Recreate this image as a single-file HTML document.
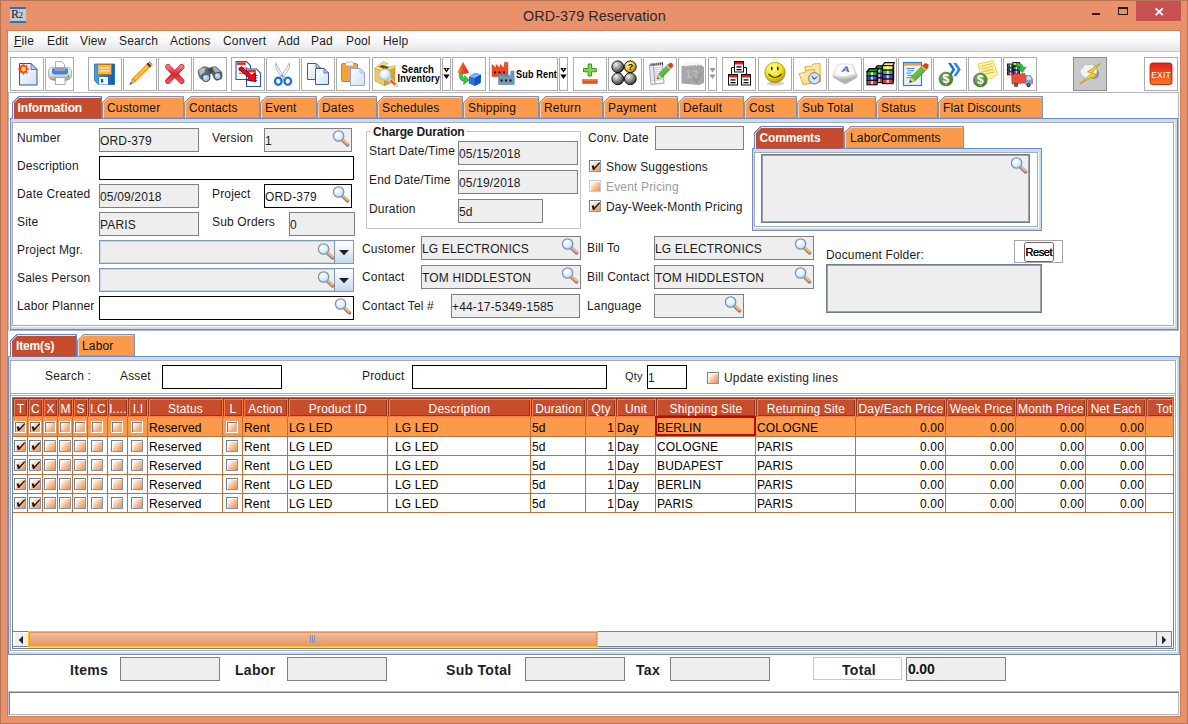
<!DOCTYPE html><html><head><meta charset="utf-8"><title>ORD-379 Reservation</title><style>
html,body{margin:0;padding:0}
body{width:1188px;height:724px;overflow:hidden;background:#E8916A;position:relative;font-family:"Liberation Sans",sans-serif;font-size:12px;color:#1c1c1c;letter-spacing:0.16px}
.a{position:absolute}
.t{position:absolute;white-space:nowrap;line-height:14px;height:14px}
.b{font-weight:bold;letter-spacing:-0.17px}
.f{position:absolute;box-sizing:border-box;border:1px solid #7f7f7f;background:#EEEEEE}
.fw{position:absolute;box-sizing:border-box;border:1px solid #000;background:#fff}
.tb{position:absolute;box-sizing:border-box;border:1px solid #ACACAC;background:#fff;top:57px;height:34px}
.cb{position:absolute;box-sizing:border-box;width:12px;height:12px;border:1px solid #6C7E94;border-right-color:#8496ac;border-bottom-color:#8496ac;background:linear-gradient(135deg,#ffffff 0%,#ffffff 14%,#fbdcc4 38%,#f6b98c 62%,#ef8e48 100%);box-shadow:inset 1px 1px 0 #fff}
.cbs{border-color:#fff;box-shadow:inset 1px 1px 0 #6C7E94,inset -1px -1px 0 #b4bccb}
.cbd{border-color:#b9cde6}
.cbt{}
.th{position:absolute;box-sizing:border-box;top:398px;height:19px;background:#C64E2D;border:1px solid;border-color:#93361A #FF7A45 #FF7A45 #93361A;box-shadow:inset 1px 1px 0 #FF7A45,inset -1px -1px 0 #93361A;color:#fff;text-align:center;line-height:20px;white-space:nowrap;overflow:hidden}
.c{position:absolute;white-space:nowrap;line-height:14px;height:14px;color:#000}
</style></head><body><svg width="0" height="0" style="position:absolute"><defs>
<radialGradient id="lens" cx="40%" cy="35%" r="70%"><stop offset="0" stop-color="#ffffff"/><stop offset="0.55" stop-color="#dcf0fd"/><stop offset="1" stop-color="#a6d2f6"/></radialGradient>
</defs></svg>
<div class="a" style="left:0;top:0;width:1188px;height:724px;box-sizing:border-box;border:1px solid #B87352"></div>
<div class="a" style="left:7px;top:30px;width:1174px;height:687px;background:#C98058"></div>
<div class="a" id="content" style="left:8px;top:31px;width:1172px;height:685px;background:#fff"></div>
<div class="t" style="left:523px;top:7px;font-size:14.4px;line-height:18px;height:18px;color:#2a2a2a;letter-spacing:0.06px" id="title">ORD-379 Reservation</div>
<div class="a" style="left:10px;top:7px;width:16px;height:16px;background:#c6cacf;border-top:2px solid #2470c8;border-bottom:2px solid #2470c8;box-sizing:border-box"><div class="t" style="left:1px;top:-2px;font-family:'Liberation Serif',serif;font-size:12px;color:#1a1a1a;letter-spacing:-0.5px">R<span style="font-size:9px">2</span></div></div>
<div class="a" style="left:1092px;top:13px;width:8px;height:2px;background:#1e1e1e"></div>
<div class="a" style="left:1118px;top:7px;width:10px;height:8px;box-sizing:border-box;border:1px solid #1e1e1e;border-top-width:2px"></div>
<div class="a" style="left:1136px;top:1px;width:45px;height:20px;background:#C75050"></div>
<svg class="a" style="left:1153px;top:6px" width="12" height="11" viewBox="0 0 12 11"><path d="M2.6 2.4 L9.8 9.1 M9.8 2.4 L2.6 9.1" stroke="#fff" stroke-width="1.9" fill="none"/></svg>
<div class="a" style="left:8px;top:31px;width:1172px;height:20px;background:linear-gradient(#ffffff,#fafafa 40%,#e6e6e6)"></div>
<div class="a" style="left:8px;top:51px;width:1172px;height:1px;background:#c9c9c9"></div>
<div class="t" style="left:14px;top:34px"><span style="text-decoration:underline">F</span>ile</div>
<div class="t" style="left:47px;top:34px">Edit</div>
<div class="t" style="left:80px;top:34px">View</div>
<div class="t" style="left:119px;top:34px">Search</div>
<div class="t" style="left:170px;top:34px">Actions</div>
<div class="t" style="left:223px;top:34px">Convert</div>
<div class="t" style="left:278px;top:34px">Add</div>
<div class="t" style="left:311px;top:34px">Pad</div>
<div class="t" style="left:346px;top:34px">Pool</div>
<div class="t" style="left:383px;top:34px">Help</div>
<div class="a" style="left:8px;top:92px;width:1171px;height:239px;box-sizing:border-box;border:1px solid #B6B6B6"></div>
<div class="tb" id="tb0" style="left:10px;width:34px;background:#fff;border-color:#ACACAC"></div>
<div class="tb" id="tb1" style="left:45px;width:29px;background:#fff;border-color:#ACACAC"></div>
<div class="tb" id="tb2" style="left:88px;width:34px;background:#fff;border-color:#ACACAC"></div>
<div class="tb" id="tb3" style="left:123px;width:34px;background:#fff;border-color:#ACACAC"></div>
<div class="tb" id="tb4" style="left:158px;width:34px;background:#fff;border-color:#ACACAC"></div>
<div class="tb" id="tb5" style="left:193px;width:34px;background:#fff;border-color:#ACACAC"></div>
<div class="tb" id="tb6" style="left:231px;width:34px;background:#fff;border-color:#ACACAC"></div>
<div class="tb" id="tb7" style="left:266px;width:34px;background:#fff;border-color:#ACACAC"></div>
<div class="tb" id="tb8" style="left:301px;width:34px;background:#fff;border-color:#ACACAC"></div>
<div class="tb" id="tb9" style="left:336px;width:34px;background:#fff;border-color:#ACACAC"></div>
<div class="tb" id="tb10" style="left:372px;width:69px;background:#fff;border-color:#ACACAC"></div>
<div class="tb" id="tb11" style="left:442px;width:9px;background:#fff;border-color:#ACACAC"></div>
<div class="tb" id="tb12" style="left:452px;width:34px;background:#fff;border-color:#ACACAC"></div>
<div class="tb" id="tb13" style="left:489px;width:69px;background:#fff;border-color:#ACACAC"></div>
<div class="tb" id="tb14" style="left:559px;width:9px;background:#fff;border-color:#ACACAC"></div>
<div class="tb" id="tb15" style="left:573px;width:34px;background:#fff;border-color:#ACACAC"></div>
<div class="tb" id="tb16" style="left:608px;width:34px;background:#fff;border-color:#ACACAC"></div>
<div class="tb" id="tb17" style="left:643px;width:34px;background:#fff;border-color:#ACACAC"></div>
<div class="tb" id="tb18" style="left:678px;width:28px;background:#fff;border-color:#ACACAC"></div>
<div class="tb" id="tb19" style="left:708px;width:9px;background:#fff;border-color:#ACACAC"></div>
<div class="tb" id="tb20" style="left:722px;width:34px;background:#fff;border-color:#ACACAC"></div>
<div class="tb" id="tb21" style="left:758px;width:34px;background:#fff;border-color:#ACACAC"></div>
<div class="tb" id="tb22" style="left:793px;width:34px;background:#fff;border-color:#ACACAC"></div>
<div class="tb" id="tb23" style="left:828px;width:34px;background:#fff;border-color:#ACACAC"></div>
<div class="tb" id="tb24" style="left:863px;width:34px;background:#fff;border-color:#ACACAC"></div>
<div class="tb" id="tb25" style="left:898px;width:34px;background:#fff;border-color:#ACACAC"></div>
<div class="tb" id="tb26" style="left:933px;width:34px;background:#fff;border-color:#ACACAC"></div>
<div class="tb" id="tb27" style="left:968px;width:34px;background:#fff;border-color:#ACACAC"></div>
<div class="tb" id="tb28" style="left:1003px;width:34px;background:#fff;border-color:#ACACAC"></div>
<div class="tb" id="tb29" style="left:1073px;width:34px;background:#C8C8C8;border-color:#8a8a8a"></div>
<div class="tb" id="tb30" style="left:1144px;width:34px;background:#fff;border-color:#ACACAC"></div>
<svg width="0" height="0" style="position:absolute"><defs>
<linearGradient id="gPage" x1="0" y1="0" x2="1" y2="1"><stop offset="0" stop-color="#ffffff"/><stop offset="1" stop-color="#cfe1f6"/></linearGradient>
<radialGradient id="gStar"><stop offset="0" stop-color="#ffe93b"/><stop offset="0.45" stop-color="#ffb01e"/><stop offset="0.75" stop-color="#f0372b"/><stop offset="1" stop-color="#f0372b" stop-opacity="0"/></radialGradient>
<linearGradient id="gPrn" x1="0" y1="0" x2="0" y2="1"><stop offset="0" stop-color="#f7f7f7"/><stop offset="0.6" stop-color="#d6d8da"/><stop offset="1" stop-color="#8e9194"/></linearGradient>
<linearGradient id="gBlue" x1="0" y1="0" x2="1" y2="0"><stop offset="0" stop-color="#4aa3ea"/><stop offset="0.5" stop-color="#1f78d1"/><stop offset="1" stop-color="#0f5cb0"/></linearGradient>
<linearGradient id="gRedX" x1="0" y1="0" x2="0" y2="1"><stop offset="0" stop-color="#f0777c"/><stop offset="0.5" stop-color="#dc2431"/><stop offset="1" stop-color="#e8525a"/></linearGradient>
<radialGradient id="gBall" cx="35%" cy="30%" r="75%"><stop offset="0" stop-color="#f2f2f2"/><stop offset="0.55" stop-color="#8c8c8c"/><stop offset="1" stop-color="#2e2e2e"/></radialGradient>
<radialGradient id="gBallY" cx="35%" cy="30%" r="75%"><stop offset="0" stop-color="#fff6b0"/><stop offset="0.6" stop-color="#f2c21d"/><stop offset="1" stop-color="#8a6a08"/></radialGradient>
<radialGradient id="gSmile" cx="40%" cy="30%" r="75%"><stop offset="0" stop-color="#ffffa8"/><stop offset="0.55" stop-color="#f4e21a"/><stop offset="1" stop-color="#a48e06"/></radialGradient>
<linearGradient id="gGold" x1="0" y1="0" x2="1" y2="1"><stop offset="0" stop-color="#f7d66a"/><stop offset="1" stop-color="#c8951a"/></linearGradient>
<linearGradient id="gFolder" x1="0" y1="0" x2="1" y2="1"><stop offset="0" stop-color="#fff6c8"/><stop offset="1" stop-color="#f7d060"/></linearGradient>
<linearGradient id="gKey" x1="0" y1="0" x2="1" y2="1"><stop offset="0" stop-color="#ffffff"/><stop offset="1" stop-color="#b9b9b9"/></linearGradient>
<linearGradient id="gGreenP" x1="0" y1="0" x2="1" y2="1"><stop offset="0" stop-color="#8be05a"/><stop offset="1" stop-color="#2f9a1f"/></linearGradient>
<linearGradient id="gExit" x1="0" y1="0" x2="0" y2="1"><stop offset="0" stop-color="#e2231a"/><stop offset="0.5" stop-color="#f04a1c"/><stop offset="1" stop-color="#f77b1c"/></linearGradient>
<linearGradient id="gCone" x1="0" y1="0" x2="1" y2="0"><stop offset="0" stop-color="#ff9a5a"/><stop offset="0.5" stop-color="#f04a1e"/><stop offset="1" stop-color="#d42a10"/></linearGradient>
<radialGradient id="gDollar" cx="40%" cy="35%" r="70%"><stop offset="0" stop-color="#7fae6c"/><stop offset="1" stop-color="#3f7a34"/></radialGradient>
</defs></svg>
<svg class="a" style="left:10px;top:57px" width="34" height="34" viewBox="0 0 34 34"><path d="M9.5 6.5 L21.0 6.5 L27.0 12.5 L27.0 28.0 L9.5 28.0 Z" fill="url(#gPage)" stroke="#3C5390" stroke-width="1"/><path d="M21.0 6.5 L21.0 12.5 L27.0 12.5 Z" fill="#b7d0ee" stroke="#3C5390" stroke-width="0.7"/><polygon points="19.7,12.0 17.1,13.5 17.9,16.4 15.0,15.6 13.5,18.2 12.0,15.6 9.1,16.4 9.9,13.5 7.3,12.0 9.9,10.5 9.1,7.6 12.0,8.4 13.5,5.8 15.0,8.4 17.9,7.6 17.1,10.5" fill="#f2402c" fill-opacity="0.85"/><circle cx="13.5" cy="12" r="4.2" fill="url(#gStar)"/><circle cx="13.5" cy="12" r="2.2" fill="#ffe63a"/></svg>
<svg class="a" style="left:45px;top:57px" width="29" height="34" viewBox="0 0 29 34"><path d="M10.5 4.5 L16.5 4.5 L19.5 7.5 L19.5 13 L10.5 13 Z" fill="#fff" stroke="#9a9a9a" stroke-width="0.8"/><path d="M3.5 14 Q3.5 10.5 8 10.5 L22 10.5 Q26.5 10.5 26.5 14 L26.5 18 Q26.5 23 20 23.5 L10 23.5 Q3.5 23 3.5 18 Z" fill="url(#gPrn)" stroke="#8a8d90" stroke-width="0.6"/><path d="M7 11.5 L23 11.5 L23 15 Q23 17.5 20 17.5 L10 17.5 Q7 17.5 7 15 Z" fill="#3f83e6"/><rect x="10" y="10.5" width="10" height="3.5" fill="#9aa0b4"/><rect x="10.5" y="20.5" width="9.5" height="7" fill="#fff" stroke="#9a9a9a" stroke-width="0.8"/><circle cx="23.3" cy="19.3" r="1" fill="#2fae3a"/></svg>
<svg class="a" style="left:88px;top:57px" width="34" height="34" viewBox="0 0 34 34"><path d="M6.5 7 L26.5 7 L26.5 27.5 L10.5 27.5 L6.5 23.5 Z" fill="url(#gBlue)" stroke="#1765b8" stroke-width="0.8"/><rect x="9.5" y="7.5" width="14" height="10" fill="#f7b64c" stroke="#b8761c" stroke-width="0.9"/><rect x="11.5" y="10" width="10" height="1.5" fill="#fde2a6"/><rect x="11.5" y="13" width="10" height="1.5" fill="#fde2a6"/><rect x="11" y="20" width="9" height="7.5" fill="#f4f7fb"/><rect x="13" y="22" width="2.2" height="3.5" fill="#1a55c0"/></svg>
<svg class="a" style="left:123px;top:57px" width="34" height="34" viewBox="0 0 34 34"><path d="M7 27.5 L8.5 22 L25 5.5 L28.5 9 L12 25.5 Z" fill="#f6a61c"/><path d="M10.2 23.8 L26.6 7.2" stroke="#fbd27a" stroke-width="1.2"/><path d="M7 27.5 L8.5 22 L12 25.5 Z" fill="#e9c9a0"/><path d="M7 27.5 L7.6 25.2 L9.2 26.8 Z" fill="#555"/><path d="M23.5 7 L25 5.5 L28.5 9 L27 10.5 Z" fill="#333"/><path d="M25.5 5 L26.5 4.3 L29.6 7.5 L29 8.5 Z" fill="#f0502a"/><path d="M6 28.5 L12 22" stroke="#000" stroke-opacity="0.12" stroke-width="3"/></svg>
<svg class="a" style="left:158px;top:57px" width="34" height="34" viewBox="0 0 34 34"><path d="M10 9.8 L23.6 24.2 M23.6 9.8 L10 24.2" stroke="#b8202a" stroke-width="5.6" stroke-linecap="round"/><path d="M10 9.8 L23.6 24.2 M23.6 9.8 L10 24.2" stroke="url(#gRedX)" stroke-width="4.4" stroke-linecap="round"/></svg>
<svg class="a" style="left:193px;top:57px" width="34" height="34" viewBox="0 0 34 34"><path d="M5 13 Q3.8 17 7.5 22 L12.5 25.2 Q17 24.5 17.6 20 L16.8 12 Q14 8.6 10 9.6 Z" fill="#666a6e"/><path d="M5.8 13.2 Q8.5 10.2 12.6 10.4 L11.6 15.5 L7 18.5 Z" fill="#b9bdc0"/><path d="M16.8 11.2 Q20 8.4 23.2 9.4 L29 15 Q30.2 19 28.6 22 L24 23.8 Q20.4 22.4 19.4 18 Z" fill="#5c6064"/><path d="M19.2 11 Q21.5 9.6 23.2 10.4 L27.4 14.4 L22.6 15.8 Z" fill="#a9adb0"/><path d="M15.2 10.8 L19.6 10.4 L19.8 16.5 L16 17 Z" fill="#45494d"/><circle cx="13" cy="20.8" r="4" fill="#4d5155"/><circle cx="13" cy="20.8" r="3.1" fill="#a4cdf6"/><circle cx="12.2" cy="20" r="1.2" fill="#dcecfc"/><circle cx="24.6" cy="19" r="3.8" fill="#4d5155"/><circle cx="24.6" cy="19" r="2.9" fill="#a4cdf6"/><circle cx="23.9" cy="18.3" r="1.1" fill="#dcecfc"/></svg>
<svg class="a" style="left:231px;top:57px" width="34" height="34" viewBox="0 0 34 34"><path d="M5 4.5 L15.5 4.5 L19.5 8.5 L19.5 22.5 L5 22.5 Z" fill="#fff" stroke="#2f55a8" stroke-width="1.1"/><rect x="5.8" y="5.3" width="9.0" height="2.6" fill="#f02a1a"/><rect x="8" y="10.5" width="8.5" height="1" fill="#3c6ac8"/><rect x="8" y="13.1" width="8.5" height="1" fill="#3c6ac8"/><rect x="8" y="15.7" width="8.5" height="1" fill="#3c6ac8"/><path d="M15.5 12 L25.5 12 L29.5 16 L29.5 29.5 L15.5 29.5 Z" fill="#fff" stroke="#2f55a8" stroke-width="1.1"/><rect x="16.3" y="12.8" width="8.5" height="2.6" fill="#f02a1a"/><rect x="18.5" y="18.0" width="8" height="1" fill="#3c6ac8"/><rect x="18.5" y="20.6" width="8" height="1" fill="#3c6ac8"/><rect x="18.5" y="23.2" width="8" height="1" fill="#3c6ac8"/><path d="M7.6 12.2 L10.2 9.6 L20.8 18.2 L24.3 15.5 L24.8 24.6 L15.5 23 L18.2 20.8 Z" fill="#f00a0a" stroke="#400000" stroke-width="0.8"/></svg>
<svg class="a" style="left:266px;top:57px" width="34" height="34" viewBox="0 0 34 34"><path d="M9.5 6 Q8.5 10 12 15 L18.5 24 L20 22.5 L12.5 11 Z" fill="#f2f2f2" stroke="#9a9a9a" stroke-width="0.7"/><path d="M23.5 6 Q24.5 10 21 15 L14.5 24 L13 22.5 L20.5 11 Z" fill="#fafafa" stroke="#9a9a9a" stroke-width="0.7"/><circle cx="16.5" cy="19" r="0.9" fill="#777"/><ellipse cx="12.3" cy="24.3" rx="3.3" ry="3.6" fill="none" stroke="#1c6fe0" stroke-width="2.3"/><ellipse cx="21.8" cy="24.3" rx="3.3" ry="3.6" fill="none" stroke="#1c6fe0" stroke-width="2.3"/></svg>
<svg class="a" style="left:301px;top:57px" width="34" height="34" viewBox="0 0 34 34"><path d="M6.5 6.5 L15.0 6.5 L19.5 11.0 L19.5 22.5 L6.5 22.5 Z" fill="url(#gPage)" stroke="#44599a" stroke-width="1"/><path d="M15.0 6.5 L15.0 11.0 L19.5 11.0 Z" fill="#b7d0ee" stroke="#44599a" stroke-width="0.7"/><path d="M14.5 11.5 L23.0 11.5 L27.5 16.0 L27.5 27.5 L14.5 27.5 Z" fill="url(#gPage)" stroke="#44599a" stroke-width="1"/><path d="M23.0 11.5 L23.0 16.0 L27.5 16.0 Z" fill="#b7d0ee" stroke="#44599a" stroke-width="0.7"/></svg>
<svg class="a" style="left:336px;top:57px" width="34" height="34" viewBox="0 0 34 34"><rect x="5.5" y="6.5" width="16" height="18" rx="1.5" fill="#f6a23a" stroke="#c27a1c" stroke-width="0.9"/><path d="M9.5 9 L9.5 6.5 Q9.5 5 11.5 5 L15.5 5 Q17.5 5 17.5 6.5 L17.5 9 Z" fill="#f4f4f4" stroke="#a5a5a5" stroke-width="0.7"/><path d="M14.5 11.5 L24 11.5 L28.5 16 L28.5 28.5 L14.5 28.5 Z" fill="url(#gPage)" stroke="#8f9ae0" stroke-width="0.9"/><path d="M24 11.5 L24 16 L28.5 16 Z" fill="#dfe8f8" stroke="#8f9ae0" stroke-width="0.6"/></svg>
<svg class="a" style="left:372px;top:57px" width="69" height="34" viewBox="0 0 69 34"><path d="M5 9.5 L11 5 L15.8 6.4 L10 10.8 Z" fill="#f9e08a" stroke="#b8881c" stroke-width="0.5"/><path d="M5 11 L10 8 L17.5 10 L12.5 14 Z" fill="#6e4a0c"/><path d="M2.8 11.2 L12.5 14.5 L12.5 28.6 L3.2 24.2 Z" fill="#f4ca50" stroke="#b8881c" stroke-width="0.5"/><path d="M12.5 14.5 L22.9 11.2 L22.9 24.6 L12.5 28.6 Z" fill="#d9a428" stroke="#a87a14" stroke-width="0.5"/><path d="M17.5 10 L23.4 8.6 L22.9 11.2 L12.5 14.5 Z" fill="#f9dc74" stroke="#b8881c" stroke-width="0.5"/><path d="M2.8 11.2 L5 9.5 L10 10.8 L12.5 14.5 Z" fill="#fbe89a" stroke="#b8881c" stroke-width="0.4"/><path d="M17 22 L24.5 28.5" stroke="#d8d8d8" stroke-width="3.8" stroke-linecap="round"/><path d="M18.5 23.2 L23.5 27.6" stroke="#f0562a" stroke-width="2.6"/><path d="M19.5 22.6 L24 26.8" stroke="#f7b04a" stroke-width="1"/><circle cx="12.8" cy="17.5" r="5.6" fill="url(#lens)" stroke="#b9c4cf" stroke-width="1.4"/><text x="29.5" y="15.8" font-family="Liberation Sans, sans-serif" font-weight="bold" font-size="10" fill="#000" textLength="32.5" lengthAdjust="spacingAndGlyphs">Search</text><text x="25.5" y="24.9" font-family="Liberation Sans, sans-serif" font-weight="bold" font-size="10" fill="#000" textLength="42.5" lengthAdjust="spacingAndGlyphs">Inventory</text></svg>
<svg class="a" style="left:442px;top:57px" width="9" height="34" viewBox="0 0 9 34"><path d="M1.3 11 L7.7 11 L4.5 15.4 Z" fill="#000"/><path d="M1.3 17.6 L7.7 17.6 L4.5 22 Z" fill="#000"/><circle cx="4.5" cy="12.3" r="0.7" fill="#fff"/></svg>
<svg class="a" style="left:452px;top:57px" width="34" height="34" viewBox="0 0 34 34"><path d="M11 5 L17 15.5 Q11 18.5 5 15.5 Z" fill="url(#gCone)"/><path d="M17 19.5 L23 15.8 L29 17.5 L28.5 26 L22.5 29 L17 26.5 Z" fill="#2f6fe0"/><path d="M17 19.5 L23 15.8 L29 17.5 L23 21 Z" fill="#7fb0f7"/><path d="M23 21 L29 17.5 L28.5 26 L22.5 29 Z" fill="#1c4fc0"/><path d="M7.5 16 Q6 23 12 24.5 L11.5 27.5 L17.5 23 L12.5 18.5 L12.3 21.3 Q10 20.5 10.8 16 Z" fill="#3fc43a" stroke="#1f8a1c" stroke-width="0.5"/></svg>
<svg class="a" style="left:489px;top:57px" width="69" height="34" viewBox="0 0 69 34"><path d="M3 19.5 L3 7.5 L7 11 L7 7.5 L11 11 L11 7.5 L15 11 L15.5 5.5 L18.8 5.5 L19 19.5 Z" fill="#f04a1e" stroke="#c8300c" stroke-width="0.5"/><rect x="5" y="14.5" width="2" height="2" fill="#111"/><rect x="9.5" y="14.5" width="2" height="2" fill="#111"/><rect x="14" y="14.5" width="2" height="2" fill="#111"/><path d="M9.5 27.5 L9.5 16 L13.5 19.5 L13.5 16 L17.5 19.5 L17.5 16 L21.5 19.5 L22 14 L25 14 L25.3 27.5 Z" fill="#6f9ab8" stroke="#4f7898" stroke-width="0.5"/><rect x="11.5" y="22.5" width="2" height="2" fill="#111"/><rect x="16" y="22.5" width="2" height="2" fill="#111"/><rect x="20.5" y="22.5" width="2" height="2" fill="#111"/><text x="27" y="20.8" font-family="Liberation Sans, sans-serif" font-weight="bold" font-size="10.5" fill="#000" textLength="41" lengthAdjust="spacingAndGlyphs">Sub Rent</text></svg>
<svg class="a" style="left:559px;top:57px" width="9" height="34" viewBox="0 0 9 34"><path d="M1.3 11 L7.7 11 L4.5 15.4 Z" fill="#000"/><path d="M1.3 17.6 L7.7 17.6 L4.5 22 Z" fill="#000"/><circle cx="4.5" cy="12.3" r="0.7" fill="#fff"/></svg>
<svg class="a" style="left:573px;top:57px" width="34" height="34" viewBox="0 0 34 34"><path d="M15.2 7 L18.6 7 L18.6 11.6 L23.3 11.6 L23.3 14.8 L18.6 14.8 L18.6 19 L15.2 19 L15.2 14.8 L10.5 14.8 L10.5 11.6 L15.2 11.6 Z" fill="#8fd45a" stroke="#1f8a12" stroke-width="0.9"/><rect x="9.3" y="22.3" width="15.4" height="4.5" fill="#f04a22"/><rect x="9.3" y="22.3" width="15.4" height="1.5" fill="#f77a4a"/></svg>
<svg class="a" style="left:608px;top:57px" width="34" height="34" viewBox="0 0 34 34"><circle cx="9.8" cy="9.8" r="5.9" fill="url(#gBall)" stroke="#111" stroke-width="1"/><circle cx="22.3" cy="9.8" r="5.9" fill="url(#gBallY)" stroke="#111" stroke-width="1"/><circle cx="9.8" cy="21.8" r="5.9" fill="url(#gBall)" stroke="#111" stroke-width="1"/><circle cx="22.3" cy="21.8" r="5.9" fill="url(#gBall)" stroke="#111" stroke-width="1"/><text x="22.4" y="13.3" text-anchor="middle" font-family="Liberation Sans, sans-serif" font-weight="bold" font-size="9.5" fill="#111">?</text></svg>
<svg class="a" style="left:643px;top:57px" width="34" height="34" viewBox="0 0 34 34"><path d="M6.5 8 L19.5 6.5 L21 26 L8 27.5 Z" fill="#f4f8ff" stroke="#8a8fd0" stroke-width="0.9"/><path d="M8.3 11.0 L19.6 9.8" stroke="#9fc0f0" stroke-width="0.7"/><path d="M8.4 13.1 L19.700000000000003 11.9" stroke="#9fc0f0" stroke-width="0.7"/><path d="M8.5 15.2 L19.8 14.0" stroke="#9fc0f0" stroke-width="0.7"/><path d="M8.600000000000001 17.3 L19.900000000000002 16.1" stroke="#9fc0f0" stroke-width="0.7"/><path d="M8.700000000000001 19.4 L20.0 18.200000000000003" stroke="#9fc0f0" stroke-width="0.7"/><path d="M8.8 21.5 L20.1 20.3" stroke="#9fc0f0" stroke-width="0.7"/><path d="M8.9 23.6 L20.200000000000003 22.400000000000002" stroke="#9fc0f0" stroke-width="0.7"/><path d="M10.5 8 L12 27" stroke="#f07a5a" stroke-width="0.9"/><path d="M8.0 6.3 L8.2 9.3" stroke="#333" stroke-width="0.9"/><path d="M9.9 6.1 L10.1 9.100000000000001" stroke="#333" stroke-width="0.9"/><path d="M11.8 5.8999999999999995 L12.0 8.9" stroke="#333" stroke-width="0.9"/><path d="M13.7 5.699999999999999 L13.899999999999999 8.700000000000001" stroke="#333" stroke-width="0.9"/><path d="M15.6 5.5 L15.799999999999999 8.5" stroke="#333" stroke-width="0.9"/><path d="M17.5 5.3 L17.7 8.3" stroke="#333" stroke-width="0.9"/><path d="M19.4 5.1 L19.599999999999998 8.100000000000001" stroke="#333" stroke-width="0.9"/><path d="M14 22 L15.3 17.2 L24.5 8 L28 11.5 L18.8 20.7 Z" fill="url(#gGreenP)" stroke="#2a7a1a" stroke-width="0.5"/><path d="M14 22 L15.3 17.2 L18.8 20.7 Z" fill="#e8cfa8"/><path d="M14 22 L14.6 19.9 L16.1 21.4 Z" fill="#444"/><path d="M24.5 8 L26 6.5 Q28 5 29.5 6.8 Q31 8.5 29.5 10 L28 11.5 Z" fill="#e03a22"/><path d="M23.8 8.7 L27.3 12.2" stroke="#d8d8d8" stroke-width="1.2"/></svg>
<svg class="a" style="left:678px;top:57px" width="29" height="34" viewBox="0 0 29 34"><path d="M3.5 9 L22 7.5 L26 10 L26 26 L21 28 L3.5 26.5 Z" fill="#a6a6a6"/><path d="M6.0 5.8 q2 0.5 1.2 3.6" stroke="#f0f0f0" stroke-width="1.3" fill="none"/><path d="M8.8 5.7 q2 0.5 1.2 3.6" stroke="#f0f0f0" stroke-width="1.3" fill="none"/><path d="M11.6 5.6 q2 0.5 1.2 3.6" stroke="#f0f0f0" stroke-width="1.3" fill="none"/><path d="M14.399999999999999 5.5 q2 0.5 1.2 3.6" stroke="#f0f0f0" stroke-width="1.3" fill="none"/><path d="M17.2 5.3999999999999995 q2 0.5 1.2 3.6" stroke="#f0f0f0" stroke-width="1.3" fill="none"/><path d="M20.0 5.3 q2 0.5 1.2 3.6" stroke="#f0f0f0" stroke-width="1.3" fill="none"/><text x="7.5" y="21" font-family="Liberation Sans, sans-serif" font-weight="bold" font-size="11" fill="#bcbcbc">12</text><path d="M15 19 L18.5 25.5 L23.5 15.5" stroke="#969696" stroke-width="1.6" fill="none"/></svg>
<svg class="a" style="left:708px;top:57px" width="9" height="34" viewBox="0 0 9 34"><path d="M1.3 11 L7.7 11 L4.5 15.4 Z" fill="#9a9a9a"/><path d="M1.3 17.6 L7.7 17.6 L4.5 22 Z" fill="#9a9a9a"/></svg>
<svg class="a" style="left:722px;top:57px" width="34" height="34" viewBox="0 0 34 34"><path d="M12.5 10.5 L9.5 10.5 L9.5 17 M21.5 10.5 L24.5 10.5 L24.5 17" stroke="#111" stroke-width="1" fill="none"/><rect x="12.5" y="4.5" width="9" height="10.5" fill="#fff" stroke="#111" stroke-width="1"/><rect x="13.0" y="5.0" width="8" height="2.4" fill="#f01414"/><rect x="14.5" y="9.3" width="5" height="1.3" fill="#000"/><rect x="14.5" y="12.0" width="5" height="1.3" fill="#000"/><rect x="6.5" y="17.5" width="9" height="10.5" fill="#fff" stroke="#111" stroke-width="1"/><rect x="7.0" y="18.0" width="8" height="2.4" fill="#f01414"/><rect x="8.5" y="22.3" width="5" height="1.3" fill="#000"/><rect x="8.5" y="25.0" width="5" height="1.3" fill="#000"/><rect x="19.5" y="17.5" width="9" height="10.5" fill="#fff" stroke="#111" stroke-width="1"/><rect x="20.0" y="18.0" width="8" height="2.4" fill="#f01414"/><rect x="21.5" y="22.3" width="5" height="1.3" fill="#000"/><rect x="21.5" y="25.0" width="5" height="1.3" fill="#000"/></svg>
<svg class="a" style="left:758px;top:57px" width="34" height="34" viewBox="0 0 34 34"><ellipse cx="17.5" cy="26.5" rx="9" ry="2.2" fill="#000" fill-opacity="0.18"/><circle cx="17" cy="15.5" r="10.2" fill="url(#gSmile)" stroke="#8a7a08" stroke-width="0.6"/><ellipse cx="13.8" cy="11.5" rx="0.9" ry="1.9" fill="#3a3208"/><ellipse cx="19.8" cy="11.5" rx="0.9" ry="1.9" fill="#3a3208"/><path d="M10.5 17 Q17 24 23.5 17" stroke="#3a3208" stroke-width="1.2" fill="none"/></svg>
<svg class="a" style="left:793px;top:57px" width="34" height="34" viewBox="0 0 34 34"><path d="M12 9.5 L19 9 L20 7 L27 6.5 L27.5 25 L13 26 Z" fill="#fce9a0" stroke="#e09a2a" stroke-width="0.8"/><path d="M6 16.5 L12 15.5 L13 13.5 L21.5 12.5 L23 26 L10 27.5 Z" fill="url(#gFolder)" stroke="#e8a030" stroke-width="0.9"/><circle cx="21.3" cy="21.3" r="5.6" fill="#cfe6fb" stroke="#8a94a6" stroke-width="1.2"/><path d="M19 19.2 L21.3 22.3 L24 19.5" stroke="#222" stroke-width="1" fill="none"/></svg>
<svg class="a" style="left:828px;top:57px" width="34" height="34" viewBox="0 0 34 34"><path d="M9.5 7.5 Q17 6 24.5 7.3 L29.3 18.5 Q29.5 20 28 21 L18.5 26.6 Q17 27.3 15.5 26.5 L5.5 20.5 Q4 19.5 4.6 18 Z" fill="url(#gKey)" stroke="#d2d2d2" stroke-width="0.5"/><path d="M10.3 8.3 Q17 7 23.8 8.2 L27.3 17 Q17 21 7 17.5 Z" fill="#ffffff" fill-opacity="0.85"/><path d="M4.8 18.6 Q17 24 29.2 19 L28 21 L18.5 26.6 Q17 27.3 15.5 26.5 L5.5 20.5 Z" fill="#9a9a9a" fill-opacity="0.55"/><text x="17" y="15" text-anchor="middle" font-family="Liberation Sans, sans-serif" font-weight="bold" font-size="10" fill="#1f6fe8" transform="translate(3.2 0) skewX(-12) scale(1.15 0.8) translate(-2.2 3.2)">A</text></svg>
<svg class="a" style="left:863px;top:57px" width="34" height="34" viewBox="0 0 34 34"><path d="M12 11.8 L14.2 8.8 L21.2 8.8 L20 11.8 Z" fill="#1f8a2f" stroke="#0a0a0a" stroke-width="1.1"/><path d="M20 11.8 L21.2 8.8 L21.2 22.6 L20 25.6 Z" fill="#0a0a0a"/><rect x="12" y="11.8" width="8" height="4.6" fill="#2f9a3a" stroke="#0a0a0a" stroke-width="1.1"/><rect x="15.2" y="12.5" width="1.6" height="3.1999999999999997" fill="#fff" fill-opacity="0.8"/><rect x="12" y="16.4" width="8" height="4.6" fill="#3a4ae8" stroke="#0a0a0a" stroke-width="1.1"/><rect x="15.2" y="17.099999999999998" width="1.6" height="3.1999999999999997" fill="#fff" fill-opacity="0.8"/><rect x="12" y="21.0" width="8" height="4.6" fill="#e03a3a" stroke="#0a0a0a" stroke-width="1.1"/><rect x="15.2" y="21.7" width="1.6" height="3.1999999999999997" fill="#fff" fill-opacity="0.8"/><path d="M19.5 8.6 L21.7 5.6 L31.2 5.6 L30.0 8.6 Z" fill="#f7f08a" stroke="#0a0a0a" stroke-width="1.1"/><path d="M30.0 8.6 L31.2 5.6 L31.2 23.6 L30.0 26.6 Z" fill="#0a0a0a"/><rect x="19.5" y="8.6" width="10.5" height="4.5" fill="#f0e85a" stroke="#0a0a0a" stroke-width="1.1"/><rect x="23.7" y="9.299999999999999" width="2.1" height="3.1" fill="#fff" fill-opacity="0.8"/><rect x="19.5" y="13.1" width="10.5" height="4.5" fill="#3fae4a" stroke="#0a0a0a" stroke-width="1.1"/><rect x="23.7" y="13.799999999999999" width="2.1" height="3.1" fill="#fff" fill-opacity="0.8"/><rect x="19.5" y="17.6" width="10.5" height="4.5" fill="#3a4ae8" stroke="#0a0a0a" stroke-width="1.1"/><rect x="23.7" y="18.3" width="2.1" height="3.1" fill="#fff" fill-opacity="0.8"/><rect x="19.5" y="22.1" width="10.5" height="4.5" fill="#e03a3a" stroke="#0a0a0a" stroke-width="1.1"/><rect x="23.7" y="22.8" width="2.1" height="3.1" fill="#fff" fill-opacity="0.8"/><path d="M4 14.6 L6.2 11.6 L15.2 11.6 L14 14.6 Z" fill="#2f8a3a" stroke="#0a0a0a" stroke-width="1.1"/><path d="M14 14.6 L15.2 11.6 L15.2 24.8 L14 27.8 Z" fill="#0a0a0a"/><rect x="4" y="14.6" width="10" height="4.4" fill="#2fa83a" stroke="#0a0a0a" stroke-width="1.1"/><rect x="8.0" y="15.299999999999999" width="2.0" height="3.0000000000000004" fill="#fff" fill-opacity="0.8"/><rect x="4" y="19.0" width="10" height="4.4" fill="#3a4ae8" stroke="#0a0a0a" stroke-width="1.1"/><rect x="8.0" y="19.7" width="2.0" height="3.0000000000000004" fill="#fff" fill-opacity="0.8"/><rect x="4" y="23.4" width="10" height="4.4" fill="#e03a3a" stroke="#0a0a0a" stroke-width="1.1"/><rect x="8.0" y="24.099999999999998" width="2.0" height="3.0000000000000004" fill="#fff" fill-opacity="0.8"/></svg>
<svg class="a" style="left:898px;top:57px" width="34" height="34" viewBox="0 0 34 34"><rect x="5.5" y="5.5" width="18" height="23" fill="#eaf2fc" stroke="#2f7fd0" stroke-width="1.2"/><rect x="6" y="6" width="17" height="2.6" fill="#f79a3a"/><rect x="8.5" y="11.0" width="8.0" height="1" fill="#3f8fd8"/><rect x="9.5" y="13.3" width="6.5" height="1" fill="#3f8fd8"/><rect x="8.5" y="15.6" width="5.0" height="1" fill="#3f8fd8"/><rect x="9.5" y="17.9" width="8.0" height="1" fill="#3f8fd8"/><rect x="8.5" y="20.2" width="6.5" height="1" fill="#3f8fd8"/><path d="M11.5 25.5 L13 20 L24.5 8.5 L28.5 12.5 L17 24 Z" fill="url(#gGreenP)" stroke="#2a7a1a" stroke-width="0.5"/><path d="M11.5 25.5 L13 20 L17 24 Z" fill="#e8c88a"/><path d="M11.5 25.5 L12.2 23 L14 24.8 Z" fill="#333"/><path d="M24.5 8.5 L26.5 6.5 Q28.5 5.5 30 7.3 Q31.3 9 30.3 10.6 L28.5 12.5 Z" fill="#e03a22"/><path d="M23.8 9.2 L27.8 13.2" stroke="#f2c03a" stroke-width="1.3"/></svg>
<svg class="a" style="left:933px;top:57px" width="34" height="34" viewBox="0 0 34 34"><path d="M15 6 L18 6 L22.3 12.6 L18 19.3 L15 19.3 L19.3 12.6 Z" fill="#1f6fe0"/><path d="M20.4 6 L23.4 6 L27.7 12.6 L23.4 19.3 L20.4 19.3 L24.7 12.6 Z" fill="#2f7ff0"/><circle cx="13" cy="22" r="7" fill="url(#gDollar)" stroke="#3a6a30" stroke-width="0.5"/><text x="13" y="26.3" text-anchor="middle" font-family="Liberation Sans, sans-serif" font-weight="bold" font-size="12" fill="#fff">$</text></svg>
<svg class="a" style="left:968px;top:57px" width="34" height="34" viewBox="0 0 34 34"><path d="M10 7 L25 3.5 L27.5 11 L30 17 L24 21 L14 23.5 Z" fill="#fdf5a8" stroke="#f2c83a" stroke-width="0.9"/><path d="M12.5 9.5 L24.5 6.5" stroke="#e2c25a" stroke-width="1.1"/><path d="M13.1 12.3 L25.1 9.3" stroke="#e2c25a" stroke-width="1.1"/><path d="M13.7 15.1 L25.7 12.1" stroke="#e2c25a" stroke-width="1.1"/><path d="M14.3 17.9 L26.3 14.899999999999999" stroke="#e2c25a" stroke-width="1.1"/><circle cx="12.3" cy="23" r="7" fill="url(#gDollar)" stroke="#3a6a30" stroke-width="0.5"/><text x="12.3" y="27.3" text-anchor="middle" font-family="Liberation Sans, sans-serif" font-weight="bold" font-size="12" fill="#fff">$</text></svg>
<svg class="a" style="left:1003px;top:57px" width="34" height="34" viewBox="0 0 34 34"><rect x="4.5" y="7.0" width="6" height="3.0" fill="#2f9a3a" stroke="#0a0a0a" stroke-width="0.9"/><rect x="7.02" y="7.5" width="1.08" height="2.9" fill="#fff" fill-opacity="0.75"/><rect x="4.5" y="10.9" width="6" height="3.0" fill="#3a4ae8" stroke="#0a0a0a" stroke-width="0.9"/><rect x="7.02" y="11.4" width="1.08" height="2.9" fill="#fff" fill-opacity="0.75"/><rect x="4.5" y="14.8" width="6" height="3.0" fill="#e03a3a" stroke="#0a0a0a" stroke-width="0.9"/><rect x="7.02" y="15.3" width="1.08" height="2.9" fill="#fff" fill-opacity="0.75"/><rect x="10" y="5.5" width="6.5" height="3.0" fill="#e8e04a" stroke="#0a0a0a" stroke-width="0.9"/><rect x="12.73" y="6.0" width="1.17" height="2.9" fill="#fff" fill-opacity="0.75"/><rect x="10" y="9.4" width="6.5" height="3.0" fill="#2f9a3a" stroke="#0a0a0a" stroke-width="0.9"/><rect x="12.73" y="9.9" width="1.17" height="2.9" fill="#fff" fill-opacity="0.75"/><rect x="10" y="13.3" width="6.5" height="3.0" fill="#3a4ae8" stroke="#0a0a0a" stroke-width="0.9"/><rect x="12.73" y="13.8" width="1.17" height="2.9" fill="#fff" fill-opacity="0.75"/><path d="M13 6.5 Q19 5 20.5 10.5 L23 10 L19.5 15.5 L14.5 11.8 L17.3 11.2 Q16.5 8.5 13 9.5 Z" fill="#2fb83a" stroke="#1a7a1f" stroke-width="0.5"/><path d="M8.5 17.5 L22 16.5 L23 26 L9 27 Z" fill="#e8503a" stroke="#a8301f" stroke-width="0.5"/><path d="M22 18.5 L27.5 18.5 L29.5 22 L29.5 27 L23 27.5 Z" fill="#8f9ac8" stroke="#5a648a" stroke-width="0.5"/><path d="M24 19.5 L27 19.5 L28.5 22.5 L24 22.8 Z" fill="#dfe8fb"/><circle cx="13" cy="28" r="2" fill="#333"/><circle cx="25.5" cy="28.3" r="2" fill="#333"/><circle cx="13" cy="28" r="0.8" fill="#aaa"/><circle cx="25.5" cy="28.3" r="0.8" fill="#aaa"/></svg>
<svg class="a" style="left:1073px;top:57px" width="34" height="34" viewBox="0 0 34 34"><ellipse cx="21" cy="16.5" rx="5" ry="5.5" fill="#8e8e8e"/><path d="M8 17 Q5.5 12.5 10 11 Q11 6.5 16 8 Q20 6 22 10.5 Q25 12 23.5 16.5 Q23 21 18 20.5 Q12 23 8 17 Z" fill="#f2f2f2" stroke="#b5b5b5" stroke-width="0.5"/><path d="M27 6.5 L14.5 14.8 L18.8 16.2 L6.8 27 L23.5 17.5 L19.2 15.8 Z" fill="#f9cf26" stroke="#b88a08" stroke-width="0.7"/></svg>
<svg class="a" style="left:1144px;top:57px" width="34" height="34" viewBox="0 0 34 34"><rect x="6" y="6" width="22" height="21.5" rx="2.5" fill="url(#gExit)" stroke="#a81208" stroke-width="0.8"/><text x="17" y="21" text-anchor="middle" font-family="Liberation Sans, sans-serif" font-size="9.5" fill="#fff" textLength="19.5" lengthAdjust="spacingAndGlyphs">EXIT</text></svg>
<div class="a" style="left:10px;top:118px;width:1168px;height:212px;box-sizing:border-box;border:1px solid #6C8CCB;border-right-color:#7B8A9C;border-bottom-color:#7B8A9C;background:#C8DDF5"></div>
<div class="a" style="left:12px;top:122px;width:1163px;height:205px;background:#fff"></div>
<div class="a" style="left:12px;top:122px;width:1162px;height:204px;box-sizing:border-box;border:1px solid #ABABAB;background:#fff"></div>
<svg class="a" style="left:12px;top:96px" width="90" height="23" viewBox="0 0 90 23"><path d="M0.5 23 L0.5 6.5 L6.5 0.5 L89.5 0.5 L89.5 23 Z" fill="#C44B2B" stroke="#5C82D0" stroke-width="1"/><path d="M1.5 23 L1.5 7 L7 1.5 L88.5 1.5" fill="none" stroke="#E9EEF8" stroke-width="1"/></svg>
<div class="t" style="left:17.6px;top:101px;color:#fff;font-weight:bold;letter-spacing:-0.14px;">Information</div>
<svg class="a" style="left:102px;top:96px" width="82" height="22" viewBox="0 0 82 22"><path d="M0.5 22 L0.5 6.5 L6.5 0.5 L81.5 0.5 L81.5 22 Z" fill="#FB9A4B" stroke="#8092B4" stroke-width="1"/><path d="M1.5 22 L1.5 7 L7 1.5 L80.5 1.5" fill="none" stroke="#FDD0A8" stroke-width="1"/></svg>
<div class="t" style="left:107px;top:101px;color:#111;font-weight:normal;">Customer</div>
<svg class="a" style="left:184px;top:96px" width="76" height="22" viewBox="0 0 76 22"><path d="M0.5 22 L0.5 6.5 L6.5 0.5 L75.5 0.5 L75.5 22 Z" fill="#FB9A4B" stroke="#8092B4" stroke-width="1"/><path d="M1.5 22 L1.5 7 L7 1.5 L74.5 1.5" fill="none" stroke="#FDD0A8" stroke-width="1"/></svg>
<div class="t" style="left:189px;top:101px;color:#111;font-weight:normal;">Contacts</div>
<svg class="a" style="left:260px;top:96px" width="57" height="22" viewBox="0 0 57 22"><path d="M0.5 22 L0.5 6.5 L6.5 0.5 L56.5 0.5 L56.5 22 Z" fill="#FB9A4B" stroke="#8092B4" stroke-width="1"/><path d="M1.5 22 L1.5 7 L7 1.5 L55.5 1.5" fill="none" stroke="#FDD0A8" stroke-width="1"/></svg>
<div class="t" style="left:265px;top:101px;color:#111;font-weight:normal;">Event</div>
<svg class="a" style="left:317px;top:96px" width="60" height="22" viewBox="0 0 60 22"><path d="M0.5 22 L0.5 6.5 L6.5 0.5 L59.5 0.5 L59.5 22 Z" fill="#FB9A4B" stroke="#8092B4" stroke-width="1"/><path d="M1.5 22 L1.5 7 L7 1.5 L58.5 1.5" fill="none" stroke="#FDD0A8" stroke-width="1"/></svg>
<div class="t" style="left:322px;top:101px;color:#111;font-weight:normal;">Dates</div>
<svg class="a" style="left:377px;top:96px" width="86" height="22" viewBox="0 0 86 22"><path d="M0.5 22 L0.5 6.5 L6.5 0.5 L85.5 0.5 L85.5 22 Z" fill="#FB9A4B" stroke="#8092B4" stroke-width="1"/><path d="M1.5 22 L1.5 7 L7 1.5 L84.5 1.5" fill="none" stroke="#FDD0A8" stroke-width="1"/></svg>
<div class="t" style="left:382px;top:101px;color:#111;font-weight:normal;">Schedules</div>
<svg class="a" style="left:463px;top:96px" width="76" height="22" viewBox="0 0 76 22"><path d="M0.5 22 L0.5 6.5 L6.5 0.5 L75.5 0.5 L75.5 22 Z" fill="#FB9A4B" stroke="#8092B4" stroke-width="1"/><path d="M1.5 22 L1.5 7 L7 1.5 L74.5 1.5" fill="none" stroke="#FDD0A8" stroke-width="1"/></svg>
<div class="t" style="left:468px;top:101px;color:#111;font-weight:normal;">Shipping</div>
<svg class="a" style="left:539px;top:96px" width="64" height="22" viewBox="0 0 64 22"><path d="M0.5 22 L0.5 6.5 L6.5 0.5 L63.5 0.5 L63.5 22 Z" fill="#FB9A4B" stroke="#8092B4" stroke-width="1"/><path d="M1.5 22 L1.5 7 L7 1.5 L62.5 1.5" fill="none" stroke="#FDD0A8" stroke-width="1"/></svg>
<div class="t" style="left:544px;top:101px;color:#111;font-weight:normal;">Return</div>
<svg class="a" style="left:603px;top:96px" width="75" height="22" viewBox="0 0 75 22"><path d="M0.5 22 L0.5 6.5 L6.5 0.5 L74.5 0.5 L74.5 22 Z" fill="#FB9A4B" stroke="#8092B4" stroke-width="1"/><path d="M1.5 22 L1.5 7 L7 1.5 L73.5 1.5" fill="none" stroke="#FDD0A8" stroke-width="1"/></svg>
<div class="t" style="left:608px;top:101px;color:#111;font-weight:normal;">Payment</div>
<svg class="a" style="left:678px;top:96px" width="66" height="22" viewBox="0 0 66 22"><path d="M0.5 22 L0.5 6.5 L6.5 0.5 L65.5 0.5 L65.5 22 Z" fill="#FB9A4B" stroke="#8092B4" stroke-width="1"/><path d="M1.5 22 L1.5 7 L7 1.5 L64.5 1.5" fill="none" stroke="#FDD0A8" stroke-width="1"/></svg>
<div class="t" style="left:683px;top:101px;color:#111;font-weight:normal;">Default</div>
<svg class="a" style="left:744px;top:96px" width="53" height="22" viewBox="0 0 53 22"><path d="M0.5 22 L0.5 6.5 L6.5 0.5 L52.5 0.5 L52.5 22 Z" fill="#FB9A4B" stroke="#8092B4" stroke-width="1"/><path d="M1.5 22 L1.5 7 L7 1.5 L51.5 1.5" fill="none" stroke="#FDD0A8" stroke-width="1"/></svg>
<div class="t" style="left:749px;top:101px;color:#111;font-weight:normal;">Cost</div>
<svg class="a" style="left:797px;top:96px" width="79" height="22" viewBox="0 0 79 22"><path d="M0.5 22 L0.5 6.5 L6.5 0.5 L78.5 0.5 L78.5 22 Z" fill="#FB9A4B" stroke="#8092B4" stroke-width="1"/><path d="M1.5 22 L1.5 7 L7 1.5 L77.5 1.5" fill="none" stroke="#FDD0A8" stroke-width="1"/></svg>
<div class="t" style="left:802px;top:101px;color:#111;font-weight:normal;">Sub Total</div>
<svg class="a" style="left:876px;top:96px" width="62" height="22" viewBox="0 0 62 22"><path d="M0.5 22 L0.5 6.5 L6.5 0.5 L61.5 0.5 L61.5 22 Z" fill="#FB9A4B" stroke="#8092B4" stroke-width="1"/><path d="M1.5 22 L1.5 7 L7 1.5 L60.5 1.5" fill="none" stroke="#FDD0A8" stroke-width="1"/></svg>
<div class="t" style="left:881px;top:101px;color:#111;font-weight:normal;">Status</div>
<svg class="a" style="left:938px;top:96px" width="105" height="22" viewBox="0 0 105 22"><path d="M0.5 22 L0.5 6.5 L6.5 0.5 L104.5 0.5 L104.5 22 Z" fill="#FB9A4B" stroke="#8092B4" stroke-width="1"/><path d="M1.5 22 L1.5 7 L7 1.5 L103.5 1.5" fill="none" stroke="#FDD0A8" stroke-width="1"/></svg>
<div class="t" style="left:943px;top:101px;color:#111;font-weight:normal;">Flat Discounts</div>
<div class="t" style="left:17px;top:130.5px;">Number</div>
<div class="f" style="left:99px;top:128px;width:100px;height:24px;"></div>
<div class="t" style="left:100px;top:134px;">ORD-379</div>
<div class="t" style="left:212px;top:130.5px;">Version</div>
<div class="f" style="left:264px;top:128px;width:88px;height:24px;"></div>
<div class="t" style="left:265px;top:134px;">1</div>
<svg class="a" style="left:332px;top:130px" width="18" height="17" viewBox="0 0 18 17"><path d="M10.8 10.4 L15.6 14.9" stroke="#77789a" stroke-width="3.4" stroke-linecap="round"/><path d="M10.4 9.6 L15.5 14.1" stroke="#F2A352" stroke-width="2.4" stroke-linecap="round"/><path d="M10.6 9.2 L15.4 13.4" stroke="#FBD09A" stroke-width="0.7" stroke-linecap="round"/><circle cx="6.6" cy="6" r="5.2" fill="url(#lens)" stroke="#8294B2" stroke-width="1.3"/></svg>
<div class="t" style="left:17px;top:158.5px;">Description</div>
<div class="fw" style="left:99px;top:156px;width:255px;height:24px;"></div>
<div class="t" style="left:17px;top:186.5px;">Date Created</div>
<div class="f" style="left:99px;top:184px;width:100px;height:24px;"></div>
<div class="t" style="left:100px;top:190px;">05/09/2018</div>
<div class="t" style="left:212px;top:186.5px;">Project</div>
<div class="fw" style="left:264px;top:184px;width:88px;height:24px;"></div>
<div class="t" style="left:265px;top:190px;">ORD-379</div>
<svg class="a" style="left:332px;top:186px" width="18" height="17" viewBox="0 0 18 17"><path d="M10.8 10.4 L15.6 14.9" stroke="#77789a" stroke-width="3.4" stroke-linecap="round"/><path d="M10.4 9.6 L15.5 14.1" stroke="#F2A352" stroke-width="2.4" stroke-linecap="round"/><path d="M10.6 9.2 L15.4 13.4" stroke="#FBD09A" stroke-width="0.7" stroke-linecap="round"/><circle cx="6.6" cy="6" r="5.2" fill="url(#lens)" stroke="#8294B2" stroke-width="1.3"/></svg>
<div class="t" style="left:17px;top:214.5px;">Site</div>
<div class="f" style="left:99px;top:212px;width:100px;height:24px;"></div>
<div class="t" style="left:100px;top:218px;">PARIS</div>
<div class="t" style="left:212px;top:214.5px;">Sub Orders</div>
<div class="f" style="left:289px;top:212px;width:66px;height:24px;"></div>
<div class="t" style="left:290px;top:218px;">0</div>
<div class="t" style="left:17px;top:242.5px;">Project Mgr.</div>
<div class="t" style="left:17px;top:270.5px;">Sales Person</div>
<div class="t" style="left:17px;top:298.5px;">Labor Planner</div>
<div class="fw" style="left:99px;top:296px;width:255px;height:24px;"></div>
<svg class="a" style="left:334px;top:298px" width="18" height="17" viewBox="0 0 18 17"><path d="M10.8 10.4 L15.6 14.9" stroke="#77789a" stroke-width="3.4" stroke-linecap="round"/><path d="M10.4 9.6 L15.5 14.1" stroke="#F2A352" stroke-width="2.4" stroke-linecap="round"/><path d="M10.6 9.2 L15.4 13.4" stroke="#FBD09A" stroke-width="0.7" stroke-linecap="round"/><circle cx="6.6" cy="6" r="5.2" fill="url(#lens)" stroke="#8294B2" stroke-width="1.3"/></svg>
<div class="a" style="left:99px;top:240px;width:255px;height:24px;box-sizing:border-box;border:1px solid #7F96B4;background:#EEEEEE;box-shadow:inset 0 0 0 1px #C3D6EC"></div>
<div class="a" style="left:334px;top:240px;width:20px;height:24px;box-sizing:border-box;border:1px solid #7F96B4;background:linear-gradient(#ffffff,#eaf1fa 40%,#c3d6ee)"></div>
<svg class="a" style="left:339px;top:250px" width="10" height="6" viewBox="0 0 10 6"><path d="M0 0 L10 0 L5 5.3 Z" fill="#222"/></svg>
<svg class="a" style="left:317px;top:243px" width="18" height="17" viewBox="0 0 18 17"><path d="M10.8 10.4 L15.6 14.9" stroke="#77789a" stroke-width="3.4" stroke-linecap="round"/><path d="M10.4 9.6 L15.5 14.1" stroke="#F2A352" stroke-width="2.4" stroke-linecap="round"/><path d="M10.6 9.2 L15.4 13.4" stroke="#FBD09A" stroke-width="0.7" stroke-linecap="round"/><circle cx="6.6" cy="6" r="5.2" fill="url(#lens)" stroke="#8294B2" stroke-width="1.3"/></svg>
<div class="a" style="left:99px;top:268px;width:255px;height:24px;box-sizing:border-box;border:1px solid #7F96B4;background:#EEEEEE;box-shadow:inset 0 0 0 1px #C3D6EC"></div>
<div class="a" style="left:334px;top:268px;width:20px;height:24px;box-sizing:border-box;border:1px solid #7F96B4;background:linear-gradient(#ffffff,#eaf1fa 40%,#c3d6ee)"></div>
<svg class="a" style="left:339px;top:278px" width="10" height="6" viewBox="0 0 10 6"><path d="M0 0 L10 0 L5 5.3 Z" fill="#222"/></svg>
<svg class="a" style="left:317px;top:271px" width="18" height="17" viewBox="0 0 18 17"><path d="M10.8 10.4 L15.6 14.9" stroke="#77789a" stroke-width="3.4" stroke-linecap="round"/><path d="M10.4 9.6 L15.5 14.1" stroke="#F2A352" stroke-width="2.4" stroke-linecap="round"/><path d="M10.6 9.2 L15.4 13.4" stroke="#FBD09A" stroke-width="0.7" stroke-linecap="round"/><circle cx="6.6" cy="6" r="5.2" fill="url(#lens)" stroke="#8294B2" stroke-width="1.3"/></svg>
<div class="a" style="left:366px;top:131px;width:215px;height:98px;box-sizing:border-box;border:1px solid #c4c4c4"></div>
<div class="t b" style="left:371px;top:126px;background:#fff;padding:0 2px;height:12px;line-height:12px">Charge Duration</div>
<div class="t" style="left:369px;top:143.5px;">Start Date/Time</div>
<div class="f" style="left:458px;top:141px;width:120px;height:24px;"></div>
<div class="t" style="left:459px;top:147px;">05/15/2018</div>
<div class="t" style="left:369px;top:172.5px;">End Date/Time</div>
<div class="f" style="left:458px;top:170px;width:120px;height:24px;"></div>
<div class="t" style="left:459px;top:176px;">05/19/2018</div>
<div class="t" style="left:369px;top:201.5px;">Duration</div>
<div class="f" style="left:458px;top:199px;width:85px;height:24px;"></div>
<div class="t" style="left:459px;top:205px;">5d</div>
<div class="t" style="left:362px;top:241.5px;">Customer</div>
<div class="f" style="left:421px;top:236px;width:160px;height:24px;"></div>
<div class="t" style="left:422px;top:242px;">LG ELECTRONICS</div>
<svg class="a" style="left:561px;top:238px" width="18" height="17" viewBox="0 0 18 17"><path d="M10.8 10.4 L15.6 14.9" stroke="#77789a" stroke-width="3.4" stroke-linecap="round"/><path d="M10.4 9.6 L15.5 14.1" stroke="#F2A352" stroke-width="2.4" stroke-linecap="round"/><path d="M10.6 9.2 L15.4 13.4" stroke="#FBD09A" stroke-width="0.7" stroke-linecap="round"/><circle cx="6.6" cy="6" r="5.2" fill="url(#lens)" stroke="#8294B2" stroke-width="1.3"/></svg>
<div class="t" style="left:362px;top:269.5px;">Contact</div>
<div class="f" style="left:421px;top:265px;width:160px;height:24px;"></div>
<div class="t" style="left:422px;top:271px;">TOM HIDDLESTON</div>
<svg class="a" style="left:561px;top:267px" width="18" height="17" viewBox="0 0 18 17"><path d="M10.8 10.4 L15.6 14.9" stroke="#77789a" stroke-width="3.4" stroke-linecap="round"/><path d="M10.4 9.6 L15.5 14.1" stroke="#F2A352" stroke-width="2.4" stroke-linecap="round"/><path d="M10.6 9.2 L15.4 13.4" stroke="#FBD09A" stroke-width="0.7" stroke-linecap="round"/><circle cx="6.6" cy="6" r="5.2" fill="url(#lens)" stroke="#8294B2" stroke-width="1.3"/></svg>
<div class="t" style="left:362px;top:298.5px;">Contact Tel #</div>
<div class="f" style="left:451px;top:294px;width:129px;height:24px;"></div>
<div class="t" style="left:452px;top:300px;">+44-17-5349-1585</div>
<div class="t" style="left:588px;top:130.5px;">Conv. Date</div>
<div class="f" style="left:655px;top:126px;width:89px;height:24px;"></div>
<div class="cb" style="left:589px;top:160px"></div>
<svg class="a" style="left:589px;top:160px" width="12" height="12" viewBox="0 0 12 12"><path d="M2.6 5.6 L4.9 5.4 L5.3 7.4 L10.3 2.2 L11.2 2.9 L5.1 10 L3.9 10 Z" fill="#14181c"/></svg>
<div class="t" style="left:606px;top:159.5px;">Show Suggestions</div>
<div class="cb cbd" style="left:589px;top:180px"></div>
<div class="t" style="left:606px;top:179.5px;color:#9a9a9a">Event Pricing</div>
<div class="cb" style="left:589px;top:200px"></div>
<svg class="a" style="left:589px;top:200px" width="12" height="12" viewBox="0 0 12 12"><path d="M2.6 5.6 L4.9 5.4 L5.3 7.4 L10.3 2.2 L11.2 2.9 L5.1 10 L3.9 10 Z" fill="#14181c"/></svg>
<div class="t" style="left:606px;top:199.5px;">Day-Week-Month Pricing</div>
<div class="t" style="left:587px;top:240.5px;">Bill To</div>
<div class="f" style="left:654px;top:236px;width:160px;height:24px;"></div>
<div class="t" style="left:655px;top:242px;">LG ELECTRONICS</div>
<svg class="a" style="left:794px;top:238px" width="18" height="17" viewBox="0 0 18 17"><path d="M10.8 10.4 L15.6 14.9" stroke="#77789a" stroke-width="3.4" stroke-linecap="round"/><path d="M10.4 9.6 L15.5 14.1" stroke="#F2A352" stroke-width="2.4" stroke-linecap="round"/><path d="M10.6 9.2 L15.4 13.4" stroke="#FBD09A" stroke-width="0.7" stroke-linecap="round"/><circle cx="6.6" cy="6" r="5.2" fill="url(#lens)" stroke="#8294B2" stroke-width="1.3"/></svg>
<div class="t" style="left:587px;top:269.5px;">Bill Contact</div>
<div class="f" style="left:654px;top:265px;width:160px;height:24px;"></div>
<div class="t" style="left:655px;top:271px;">TOM HIDDLESTON</div>
<svg class="a" style="left:794px;top:267px" width="18" height="17" viewBox="0 0 18 17"><path d="M10.8 10.4 L15.6 14.9" stroke="#77789a" stroke-width="3.4" stroke-linecap="round"/><path d="M10.4 9.6 L15.5 14.1" stroke="#F2A352" stroke-width="2.4" stroke-linecap="round"/><path d="M10.6 9.2 L15.4 13.4" stroke="#FBD09A" stroke-width="0.7" stroke-linecap="round"/><circle cx="6.6" cy="6" r="5.2" fill="url(#lens)" stroke="#8294B2" stroke-width="1.3"/></svg>
<div class="t" style="left:587px;top:298.5px;">Language</div>
<div class="f" style="left:654px;top:294px;width:90px;height:24px;"></div>
<svg class="a" style="left:724px;top:296px" width="18" height="17" viewBox="0 0 18 17"><path d="M10.8 10.4 L15.6 14.9" stroke="#77789a" stroke-width="3.4" stroke-linecap="round"/><path d="M10.4 9.6 L15.5 14.1" stroke="#F2A352" stroke-width="2.4" stroke-linecap="round"/><path d="M10.6 9.2 L15.4 13.4" stroke="#FBD09A" stroke-width="0.7" stroke-linecap="round"/><circle cx="6.6" cy="6" r="5.2" fill="url(#lens)" stroke="#8294B2" stroke-width="1.3"/></svg>
<div class="a" style="left:752px;top:148px;width:290px;height:83px;box-sizing:border-box;border:1px solid #6C8CCB;border-right-color:#7B8A9C;border-bottom-color:#7B8A9C;background:#C8DDF5"></div>
<div class="a" style="left:754px;top:152px;width:285px;height:76px;background:#fff"></div>
<div class="a" style="left:754px;top:152px;width:284px;height:75px;box-sizing:border-box;border:1px solid #ABABAB;background:#fff"></div>
<svg class="a" style="left:754px;top:126px" width="90" height="23" viewBox="0 0 90 23"><path d="M0.5 23 L0.5 6.5 L6.5 0.5 L89.5 0.5 L89.5 23 Z" fill="#C44B2B" stroke="#5C82D0" stroke-width="1"/><path d="M1.5 23 L1.5 7 L7 1.5 L88.5 1.5" fill="none" stroke="#E9EEF8" stroke-width="1"/></svg>
<div class="t" style="left:759.6px;top:131px;color:#fff;font-weight:bold;letter-spacing:-0.14px;">Comments</div>
<svg class="a" style="left:844px;top:126px" width="120" height="22" viewBox="0 0 120 22"><path d="M0.5 22 L0.5 6.5 L6.5 0.5 L119.5 0.5 L119.5 22 Z" fill="#FB9A4B" stroke="#8092B4" stroke-width="1"/><path d="M1.5 22 L1.5 7 L7 1.5 L118.5 1.5" fill="none" stroke="#FDD0A8" stroke-width="1"/></svg>
<div class="t" style="left:850px;top:131px;color:#111;font-weight:normal;">LaborComments</div>
<div class="a" style="left:761px;top:154px;width:269px;height:69px;box-sizing:border-box;border:1px solid #6E7B8A;box-shadow:inset 0 0 0 1px #9AA2AC;background:#EEEEEE"></div>
<svg class="a" style="left:1010px;top:157px" width="18" height="17" viewBox="0 0 18 17"><path d="M10.8 10.4 L15.6 14.9" stroke="#77789a" stroke-width="3.4" stroke-linecap="round"/><path d="M10.4 9.6 L15.5 14.1" stroke="#F2A352" stroke-width="2.4" stroke-linecap="round"/><path d="M10.6 9.2 L15.4 13.4" stroke="#FBD09A" stroke-width="0.7" stroke-linecap="round"/><circle cx="6.6" cy="6" r="5.2" fill="url(#lens)" stroke="#8294B2" stroke-width="1.3"/></svg>
<div class="t" style="left:826px;top:247.5px;">Document Folder:</div>
<div class="a" style="left:826px;top:264px;width:216px;height:49px;box-sizing:border-box;border:1px solid #6E7B8A;box-shadow:inset 0 0 0 1px #9AA2AC;background:#EEEEEE"></div>
<div class="a" style="left:1014px;top:240px;width:49px;height:23px;box-sizing:border-box;border:1px solid #a6a6a6;background:#fff"></div>
<div class="a" style="left:1024px;top:242px;width:30px;height:20px;box-sizing:border-box;border:1px solid #6e6464;border-radius:2.5px;background:#fff"></div>
<div class="t" style="left:1025.4px;top:245px;font-size:11px;color:#000;letter-spacing:-0.4px;text-shadow:0 0 0.4px #000">Reset</div>
<div class="a" style="left:8px;top:356px;width:1172px;height:299px;box-sizing:border-box;border:1px solid #6C8CCB;border-right-color:#7B8A9C;border-bottom-color:#7B8A9C;background:#C8DDF5"></div>
<div class="a" style="left:10px;top:360px;width:1167px;height:292px;background:#fff"></div>
<div class="a" style="left:10px;top:360px;width:1166px;height:291px;box-sizing:border-box;border:1px solid #ABABAB;background:#fff"></div>
<svg class="a" style="left:10px;top:334px" width="67" height="23" viewBox="0 0 67 23"><path d="M0.5 23 L0.5 6.5 L6.5 0.5 L66.5 0.5 L66.5 23 Z" fill="#C44B2B" stroke="#5C82D0" stroke-width="1"/><path d="M1.5 23 L1.5 7 L7 1.5 L65.5 1.5" fill="none" stroke="#E9EEF8" stroke-width="1"/></svg>
<div class="t" style="left:16.0px;top:339px;color:#fff;font-weight:bold;letter-spacing:-0.14px;">Item(s)</div>
<svg class="a" style="left:77px;top:334px" width="58" height="22" viewBox="0 0 58 22"><path d="M0.5 22 L0.5 6.5 L6.5 0.5 L57.5 0.5 L57.5 22 Z" fill="#FB9A4B" stroke="#8092B4" stroke-width="1"/><path d="M1.5 22 L1.5 7 L7 1.5 L56.5 1.5" fill="none" stroke="#FDD0A8" stroke-width="1"/></svg>
<div class="t" style="left:82px;top:339px;color:#111;font-weight:normal;">Labor</div>
<div class="a" style="left:10px;top:360px;width:1166px;height:34px;box-sizing:border-box;border:1px solid #ABABAB;background:#fff"></div>
<div class="t" style="left:45px;top:368.5px;">Search :</div>
<div class="t" style="left:120px;top:368.5px;">Asset</div>
<div class="fw" style="left:162px;top:365px;width:120px;height:24px;"></div>
<div class="t" style="left:362px;top:368.5px;">Product</div>
<div class="fw" style="left:412px;top:365px;width:195px;height:24px;"></div>
<div class="t" style="left:625px;top:368.5px;font-size:11px">Qty</div>
<div class="fw" style="left:647px;top:365px;width:40px;height:24px;"></div>
<div class="t" style="left:648px;top:371px;">1</div>
<div class="cb" style="left:707px;top:372px"></div>
<div class="t" style="left:724px;top:370.5px;">Update existing lines</div>
<div class="a" style="left:10px;top:395px;width:1166px;height:256px;box-sizing:border-box;border:1px solid #ABABAB;background:#fff"></div>
<div class="a" style="left:12px;top:397px;width:1162px;height:252px;box-sizing:border-box;border:1px solid #6F8298;background:#fff"></div>
<div class="a" style="left:13px;top:417px;width:1160px;height:19px;background:#FB9A4B"></div>
<div class="a" style="left:13px;top:436px;width:1160px;height:1px;background:#B9713F"></div>
<div class="a" style="left:13px;top:455px;width:1160px;height:1px;background:#B9713F"></div>
<div class="a" style="left:13px;top:474px;width:1160px;height:1px;background:#B9713F"></div>
<div class="a" style="left:13px;top:493px;width:1160px;height:1px;background:#B9713F"></div>
<div class="a" style="left:13px;top:512px;width:1160px;height:1px;background:#B9713F"></div>
<div class="a" style="left:27px;top:417px;width:1px;height:96px;background:#B9713F"></div>
<div class="a" style="left:42px;top:417px;width:1px;height:96px;background:#B9713F"></div>
<div class="a" style="left:57px;top:417px;width:1px;height:96px;background:#B9713F"></div>
<div class="a" style="left:72px;top:417px;width:1px;height:96px;background:#B9713F"></div>
<div class="a" style="left:87px;top:417px;width:1px;height:96px;background:#B9713F"></div>
<div class="a" style="left:107px;top:417px;width:1px;height:96px;background:#B9713F"></div>
<div class="a" style="left:127px;top:417px;width:1px;height:96px;background:#B9713F"></div>
<div class="a" style="left:147px;top:417px;width:1px;height:96px;background:#B9713F"></div>
<div class="a" style="left:222px;top:417px;width:1px;height:96px;background:#B9713F"></div>
<div class="a" style="left:242px;top:417px;width:1px;height:96px;background:#B9713F"></div>
<div class="a" style="left:287px;top:417px;width:1px;height:96px;background:#B9713F"></div>
<div class="a" style="left:387px;top:417px;width:1px;height:96px;background:#B9713F"></div>
<div class="a" style="left:530px;top:417px;width:1px;height:96px;background:#B9713F"></div>
<div class="a" style="left:585px;top:417px;width:1px;height:96px;background:#B9713F"></div>
<div class="a" style="left:615px;top:417px;width:1px;height:96px;background:#B9713F"></div>
<div class="a" style="left:655px;top:417px;width:1px;height:96px;background:#B9713F"></div>
<div class="a" style="left:755px;top:417px;width:1px;height:96px;background:#B9713F"></div>
<div class="a" style="left:855px;top:417px;width:1px;height:96px;background:#B9713F"></div>
<div class="a" style="left:945px;top:417px;width:1px;height:96px;background:#B9713F"></div>
<div class="a" style="left:1015px;top:417px;width:1px;height:96px;background:#B9713F"></div>
<div class="a" style="left:1085px;top:417px;width:1px;height:96px;background:#B9713F"></div>
<div class="a" style="left:1145px;top:417px;width:1px;height:96px;background:#B9713F"></div>
<div class="th" style="left:13px;width:15px;">T</div>
<div class="th" style="left:28px;width:15px;">C</div>
<div class="th" style="left:43px;width:15px;">X</div>
<div class="th" style="left:58px;width:15px;">M</div>
<div class="th" style="left:73px;width:15px;">S</div>
<div class="th" style="left:88px;width:20px;">I.C</div>
<div class="th" style="left:108px;width:20px;">I....</div>
<div class="th" style="left:128px;width:20px;">I.I</div>
<div class="th" style="left:148px;width:75px;">Status</div>
<div class="th" style="left:223px;width:20px;">L</div>
<div class="th" style="left:243px;width:45px;">Action</div>
<div class="th" style="left:288px;width:100px;">Product ID</div>
<div class="th" style="left:388px;width:143px;">Description</div>
<div class="th" style="left:531px;width:55px;">Duration</div>
<div class="th" style="left:586px;width:30px;">Qty</div>
<div class="th" style="left:616px;width:40px;">Unit</div>
<div class="th" style="left:656px;width:100px;">Shipping Site</div>
<div class="th" style="left:756px;width:100px;">Returning Site</div>
<div class="th" style="left:856px;width:90px;">Day/Each Price</div>
<div class="th" style="left:946px;width:70px;">Week Price</div>
<div class="th" style="left:1016px;width:70px;">Month Price</div>
<div class="th" style="left:1086px;width:60px;">Net Each</div>
<div class="th" style="left:1146px;width:27px;text-align:left;padding-left:9px;">Tot</div>
<div class="cb cbs" style="left:14px;top:421px"></div>
<svg class="a" style="left:14px;top:421px" width="12" height="12" viewBox="0 0 12 12"><path d="M2.6 5.6 L4.9 5.4 L5.3 7.4 L10.3 2.2 L11.2 2.9 L5.1 10 L3.9 10 Z" fill="#14181c"/></svg>
<div class="cb cbs" style="left:29px;top:421px"></div>
<svg class="a" style="left:29px;top:421px" width="12" height="12" viewBox="0 0 12 12"><path d="M2.6 5.6 L4.9 5.4 L5.3 7.4 L10.3 2.2 L11.2 2.9 L5.1 10 L3.9 10 Z" fill="#14181c"/></svg>
<div class="cb cbs" style="left:44px;top:421px"></div>
<div class="cb cbs" style="left:59px;top:421px"></div>
<div class="cb cbs" style="left:74px;top:421px"></div>
<div class="cb cbs" style="left:91px;top:421px"></div>
<div class="cb cbs" style="left:111px;top:421px"></div>
<div class="cb cbs" style="left:131px;top:421px"></div>
<div class="cb cbs" style="left:226px;top:421px"></div>
<div class="c" style="left:149px;top:421px">Reserved</div>
<div class="c" style="left:244px;top:421px">Rent</div>
<div class="c" style="left:289px;top:421px">LG LED</div>
<div class="c" style="left:395px;top:421px">LG LED</div>
<div class="c" style="left:532px;top:421px">5d</div>
<div class="c" style="left:586px;top:421px;width:28px;text-align:right">1</div>
<div class="c" style="left:617px;top:421px">Day</div>
<div class="c" style="left:657px;top:421px">BERLIN</div>
<div class="c" style="left:757px;top:421px">COLOGNE</div>
<div class="c" style="left:856px;top:421px;width:88px;text-align:right">0.00</div>
<div class="c" style="left:946px;top:421px;width:68px;text-align:right">0.00</div>
<div class="c" style="left:1016px;top:421px;width:68px;text-align:right">0.00</div>
<div class="c" style="left:1086px;top:421px;width:58px;text-align:right">0.00</div>
<div class="cb" style="left:14px;top:440px"></div>
<svg class="a" style="left:14px;top:440px" width="12" height="12" viewBox="0 0 12 12"><path d="M2.6 5.6 L4.9 5.4 L5.3 7.4 L10.3 2.2 L11.2 2.9 L5.1 10 L3.9 10 Z" fill="#14181c"/></svg>
<div class="cb" style="left:29px;top:440px"></div>
<svg class="a" style="left:29px;top:440px" width="12" height="12" viewBox="0 0 12 12"><path d="M2.6 5.6 L4.9 5.4 L5.3 7.4 L10.3 2.2 L11.2 2.9 L5.1 10 L3.9 10 Z" fill="#14181c"/></svg>
<div class="cb" style="left:44px;top:440px"></div>
<div class="cb" style="left:59px;top:440px"></div>
<div class="cb" style="left:74px;top:440px"></div>
<div class="cb" style="left:91px;top:440px"></div>
<div class="cb" style="left:111px;top:440px"></div>
<div class="cb" style="left:131px;top:440px"></div>
<div class="cb" style="left:226px;top:440px"></div>
<div class="c" style="left:149px;top:440px">Reserved</div>
<div class="c" style="left:244px;top:440px">Rent</div>
<div class="c" style="left:289px;top:440px">LG LED</div>
<div class="c" style="left:395px;top:440px">LG LED</div>
<div class="c" style="left:532px;top:440px">5d</div>
<div class="c" style="left:586px;top:440px;width:28px;text-align:right">1</div>
<div class="c" style="left:617px;top:440px">Day</div>
<div class="c" style="left:657px;top:440px">COLOGNE</div>
<div class="c" style="left:757px;top:440px">PARIS</div>
<div class="c" style="left:856px;top:440px;width:88px;text-align:right">0.00</div>
<div class="c" style="left:946px;top:440px;width:68px;text-align:right">0.00</div>
<div class="c" style="left:1016px;top:440px;width:68px;text-align:right">0.00</div>
<div class="c" style="left:1086px;top:440px;width:58px;text-align:right">0.00</div>
<div class="cb" style="left:14px;top:459px"></div>
<svg class="a" style="left:14px;top:459px" width="12" height="12" viewBox="0 0 12 12"><path d="M2.6 5.6 L4.9 5.4 L5.3 7.4 L10.3 2.2 L11.2 2.9 L5.1 10 L3.9 10 Z" fill="#14181c"/></svg>
<div class="cb" style="left:29px;top:459px"></div>
<svg class="a" style="left:29px;top:459px" width="12" height="12" viewBox="0 0 12 12"><path d="M2.6 5.6 L4.9 5.4 L5.3 7.4 L10.3 2.2 L11.2 2.9 L5.1 10 L3.9 10 Z" fill="#14181c"/></svg>
<div class="cb" style="left:44px;top:459px"></div>
<div class="cb" style="left:59px;top:459px"></div>
<div class="cb" style="left:74px;top:459px"></div>
<div class="cb" style="left:91px;top:459px"></div>
<div class="cb" style="left:111px;top:459px"></div>
<div class="cb" style="left:131px;top:459px"></div>
<div class="cb" style="left:226px;top:459px"></div>
<div class="c" style="left:149px;top:459px">Reserved</div>
<div class="c" style="left:244px;top:459px">Rent</div>
<div class="c" style="left:289px;top:459px">LG LED</div>
<div class="c" style="left:395px;top:459px">LG LED</div>
<div class="c" style="left:532px;top:459px">5d</div>
<div class="c" style="left:586px;top:459px;width:28px;text-align:right">1</div>
<div class="c" style="left:617px;top:459px">Day</div>
<div class="c" style="left:657px;top:459px">BUDAPEST</div>
<div class="c" style="left:757px;top:459px">PARIS</div>
<div class="c" style="left:856px;top:459px;width:88px;text-align:right">0.00</div>
<div class="c" style="left:946px;top:459px;width:68px;text-align:right">0.00</div>
<div class="c" style="left:1016px;top:459px;width:68px;text-align:right">0.00</div>
<div class="c" style="left:1086px;top:459px;width:58px;text-align:right">0.00</div>
<div class="cb" style="left:14px;top:478px"></div>
<svg class="a" style="left:14px;top:478px" width="12" height="12" viewBox="0 0 12 12"><path d="M2.6 5.6 L4.9 5.4 L5.3 7.4 L10.3 2.2 L11.2 2.9 L5.1 10 L3.9 10 Z" fill="#14181c"/></svg>
<div class="cb" style="left:29px;top:478px"></div>
<svg class="a" style="left:29px;top:478px" width="12" height="12" viewBox="0 0 12 12"><path d="M2.6 5.6 L4.9 5.4 L5.3 7.4 L10.3 2.2 L11.2 2.9 L5.1 10 L3.9 10 Z" fill="#14181c"/></svg>
<div class="cb" style="left:44px;top:478px"></div>
<div class="cb" style="left:59px;top:478px"></div>
<div class="cb" style="left:74px;top:478px"></div>
<div class="cb" style="left:91px;top:478px"></div>
<div class="cb" style="left:111px;top:478px"></div>
<div class="cb" style="left:131px;top:478px"></div>
<div class="cb" style="left:226px;top:478px"></div>
<div class="c" style="left:149px;top:478px">Reserved</div>
<div class="c" style="left:244px;top:478px">Rent</div>
<div class="c" style="left:289px;top:478px">LG LED</div>
<div class="c" style="left:395px;top:478px">LG LED</div>
<div class="c" style="left:532px;top:478px">5d</div>
<div class="c" style="left:586px;top:478px;width:28px;text-align:right">1</div>
<div class="c" style="left:617px;top:478px">Day</div>
<div class="c" style="left:657px;top:478px">BERLIN</div>
<div class="c" style="left:757px;top:478px">PARIS</div>
<div class="c" style="left:856px;top:478px;width:88px;text-align:right">0.00</div>
<div class="c" style="left:946px;top:478px;width:68px;text-align:right">0.00</div>
<div class="c" style="left:1016px;top:478px;width:68px;text-align:right">0.00</div>
<div class="c" style="left:1086px;top:478px;width:58px;text-align:right">0.00</div>
<div class="cb" style="left:14px;top:497px"></div>
<svg class="a" style="left:14px;top:497px" width="12" height="12" viewBox="0 0 12 12"><path d="M2.6 5.6 L4.9 5.4 L5.3 7.4 L10.3 2.2 L11.2 2.9 L5.1 10 L3.9 10 Z" fill="#14181c"/></svg>
<div class="cb" style="left:29px;top:497px"></div>
<svg class="a" style="left:29px;top:497px" width="12" height="12" viewBox="0 0 12 12"><path d="M2.6 5.6 L4.9 5.4 L5.3 7.4 L10.3 2.2 L11.2 2.9 L5.1 10 L3.9 10 Z" fill="#14181c"/></svg>
<div class="cb" style="left:44px;top:497px"></div>
<div class="cb" style="left:59px;top:497px"></div>
<div class="cb" style="left:74px;top:497px"></div>
<div class="cb" style="left:91px;top:497px"></div>
<div class="cb" style="left:111px;top:497px"></div>
<div class="cb" style="left:131px;top:497px"></div>
<div class="cb" style="left:226px;top:497px"></div>
<div class="c" style="left:149px;top:497px">Reserved</div>
<div class="c" style="left:244px;top:497px">Rent</div>
<div class="c" style="left:289px;top:497px">LG LED</div>
<div class="c" style="left:395px;top:497px">LG LED</div>
<div class="c" style="left:532px;top:497px">5d</div>
<div class="c" style="left:586px;top:497px;width:28px;text-align:right">1</div>
<div class="c" style="left:617px;top:497px">Day</div>
<div class="c" style="left:657px;top:497px">PARIS</div>
<div class="c" style="left:757px;top:497px">PARIS</div>
<div class="c" style="left:856px;top:497px;width:88px;text-align:right">0.00</div>
<div class="c" style="left:946px;top:497px;width:68px;text-align:right">0.00</div>
<div class="c" style="left:1016px;top:497px;width:68px;text-align:right">0.00</div>
<div class="c" style="left:1086px;top:497px;width:58px;text-align:right">0.00</div>
<div class="a" style="left:655px;top:416px;width:101px;height:20px;box-sizing:border-box;border:2px solid #C00808"></div>
<div class="a" style="left:13px;top:631px;width:1160px;height:16px;box-sizing:border-box;background:#EEEEEE;border-top:1px solid #6F8298;border-bottom:1px solid #6F8298"></div>
<div class="a" style="left:13px;top:647px;width:1160px;height:1px;background:#C8DDF5"></div>
<div class="a" style="left:13px;top:647px;width:15px;height:1px;background:#fff"></div>
<div class="a" style="left:13px;top:632px;width:15px;height:14px;box-sizing:border-box;border-left:2px solid #fff;border-top:1px solid #fff;background:#EEEEEE"></div>
<svg class="a" style="left:18px;top:635px" width="6" height="10" viewBox="0 0 6 10"><path d="M5 0.8 L5 9.2 L0.8 5 Z" fill="#262626"/></svg>
<div class="a" style="left:1156px;top:632px;width:16px;height:14px;box-sizing:border-box;border-left:1px solid #6F8298;border-right:1px solid #6F8298;background:#EEEEEE"></div>
<div class="a" style="left:1172px;top:631px;width:1px;height:17px;background:#fff"></div>
<svg class="a" style="left:1161px;top:635px" width="6" height="10" viewBox="0 0 6 10"><path d="M1 0.8 L1 9.2 L5.2 5 Z" fill="#262626"/></svg>
<div class="a" style="left:28px;top:631px;width:570px;height:16px;box-sizing:border-box;border:1px solid #FFC20E;background:#E8935A"></div>
<div class="a" style="left:30px;top:633px;width:566px;height:12px;background:linear-gradient(#F1C09E,#EBAA80 45%,#E59C6C)"></div>
<div class="a" style="left:310px;top:635px;width:1px;height:8px;background:#8a8fb0"></div>
<div class="a" style="left:312px;top:635px;width:1px;height:8px;background:#8a8fb0"></div>
<div class="a" style="left:314px;top:635px;width:1px;height:8px;background:#8a8fb0"></div>
<div class="t b" style="left:70px;top:662px;font-size:14px;line-height:16px;height:16px;color:#1e1e28;letter-spacing:0.3px">Items</div>
<div class="f" style="left:120px;top:657px;width:100px;height:24px;"></div>
<div class="t b" style="left:235px;top:662px;font-size:14px;line-height:16px;height:16px;color:#1e1e28;letter-spacing:0.3px">Labor</div>
<div class="f" style="left:287px;top:657px;width:100px;height:24px;"></div>
<div class="t b" style="left:446px;top:662px;font-size:14px;line-height:16px;height:16px;color:#1e1e28;letter-spacing:0.3px">Sub Total</div>
<div class="f" style="left:525px;top:657px;width:100px;height:24px;"></div>
<div class="t b" style="left:636px;top:662px;font-size:14px;line-height:16px;height:16px;color:#1e1e28;letter-spacing:0.3px">Tax</div>
<div class="f" style="left:670px;top:657px;width:100px;height:24px;"></div>
<div class="a" style="left:813px;top:657px;width:89px;height:23px;box-sizing:border-box;border:1px solid #c8c8c8;background:#fff"></div>
<div class="t b" style="left:842px;top:662px;font-size:14px;line-height:16px;height:16px;color:#1e1e28;letter-spacing:0.3px">Total</div>
<div class="f" style="left:906px;top:657px;width:100px;height:24px;"></div>
<div class="t b" style="left:908px;top:661px;font-size:14px;line-height:16px;height:16px;color:#111">0.00</div>
<div class="a" style="left:8px;top:691px;width:1172px;height:25px;box-sizing:border-box;border:1px solid;border-color:#BCC4CC #EEF3F8 #EEF3F8 #BCC4CC;background:#fff"></div>
<div class="a" style="left:9px;top:692px;width:1170px;height:23px;box-sizing:border-box;border:1px solid;border-color:#7A7A7A #B6B6B6 #B6B6B6 #7A7A7A;background:#fff"></div>
</body></html>
